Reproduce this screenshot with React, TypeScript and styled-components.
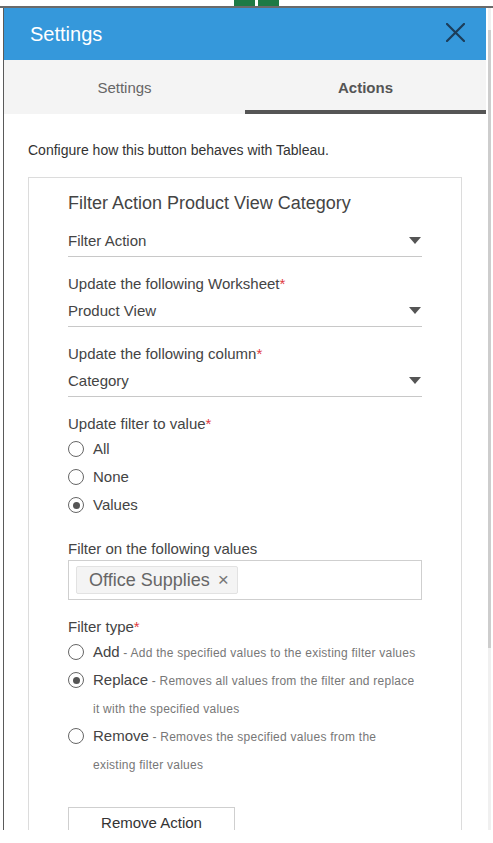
import React, { useState } from 'react';
import styled, { createGlobalStyle } from 'styled-components';

const GlobalStyle = createGlobalStyle`
    html, body {
        margin: 0;
        padding: 0;
        background: #ffffff;
        font-family: "Liberation Sans", Arial, sans-serif;
        overflow: hidden;
    }
    * {
        box-sizing: border-box;
    }
`;

type Choice = { value: string; title: string; hint?: string };

const valueChoices: Choice[] = [
    { value: 'all', title: 'All' },
    { value: 'none', title: 'None' },
    { value: 'values', title: 'Values' },
];

const typeChoices: Choice[] = [
    { value: 'add', title: 'Add', hint: 'Add the specified values to the existing filter values' },
    { value: 'replace', title: 'Replace', hint: 'Removes all values from the filter and replace it with the specified values' },
    { value: 'remove', title: 'Remove', hint: 'Removes the specified values from the existing filter values' },
];

const Caret = () => (
    <svg width="12" height="8" viewBox="0 0 12 8">
        <path d="M0 0 H12 L6 7 Z" fill="#555" />
    </svg>
);

const CloseIcon = () => (
    <svg width="19" height="19" viewBox="0 0 19 19">
        <path d="M1 1 L18 18 M18 1 L1 18" stroke="#1c3d5a" strokeWidth="2.2" strokeLinecap="square" />
    </svg>
);

interface SelectFieldProps {
    label?: string;
    value: string;
    first?: boolean;
}

const SelectField: React.FC<SelectFieldProps> = ({ label, value, first }) => (
    <Field first={first}>
        {label && <Label>{label}<Star>*</Star></Label>}
        <Select>
            <span>{value}</span>
            <Caret />
        </Select>
    </Field>
);

const App: React.FC = () => {
    const [tab, setTab] = useState('actions');
    const [target, setTarget] = useState('values');
    const [mode, setMode] = useState('replace');

    return (
        <>
            <GlobalStyle />
            <TopStrip>
                <GreenTile />
                <GreenTile />
            </TopStrip>
            <Frame>
                <Panel>
                    <Header>
                        <HeaderTitle>Settings</HeaderTitle>
                        <CloseButton aria-label="Close"><CloseIcon /></CloseButton>
                    </Header>
                    <Tabs>
                        <Tab active={tab === 'settings'} onClick={() => setTab('settings')}>Settings</Tab>
                        <Tab active={tab === 'actions'} onClick={() => setTab('actions')}>Actions</Tab>
                    </Tabs>
                    <Body>
                        <Intro>Configure how this button behaves with Tableau.</Intro>
                        <Card>
                            <CardTitle>Filter Action Product View Category</CardTitle>
                            <SelectField value="Filter Action" first />
                            <SelectField label="Update the following Worksheet" value="Product View" />
                            <SelectField label="Update the following column" value="Category" />

                            <Field>
                                <Label>Update filter to value<Star>*</Star></Label>
                                {valueChoices.map(c => (
                                    <RadioRow key={c.value} onClick={() => setTarget(c.value)}>
                                        <Radio checked={target === c.value} />
                                        <RadioText>{c.title}</RadioText>
                                    </RadioRow>
                                ))}
                            </Field>

                            <Field gap={21}>
                                <Label>Filter on the following values</Label>
                                <TagBox>
                                    <Tag>Office Supplies<TagX>×</TagX></Tag>
                                </TagBox>
                            </Field>

                            <Field gap={18}>
                                <Label>Filter type<Star>*</Star></Label>
                                {typeChoices.map(c => (
                                    <RadioRow key={c.value} onClick={() => setMode(c.value)}>
                                        <Radio checked={mode === c.value} />
                                        <RadioText>
                                            {c.title}
                                            <Hint> - {c.hint}</Hint>
                                        </RadioText>
                                    </RadioRow>
                                ))}
                            </Field>

                            <RemoveButton>Remove Action</RemoveButton>
                        </Card>
                    </Body>
                </Panel>
                <Scrollbar>
                    <Thumb />
                </Scrollbar>
            </Frame>
        </>
    );
};

const TopStrip = styled.div`
    height: 8px;
    display: flex;
    gap: 3px;
    padding-left: 234px;
    border-bottom: 2px solid #6a6a6a;
`;

const GreenTile = styled.div`
    width: 21px;
    height: 6px;
    background: #1e7a45;
`;

const Frame = styled.div`
    display: flex;
    height: 822px;
    margin-left: 3px;
    border-left: 1px solid #5a5a5a;
    overflow: hidden;
`;

const Panel = styled.div`
    width: 482px;
    display: flex;
    flex-direction: column;
    overflow: hidden;
`;

const Header = styled.div`
    height: 52px;
    flex-shrink: 0;
    background: #3598db;
    display: flex;
    align-items: center;
    justify-content: space-between;
    padding: 0 21px 0 26px;
`;

const HeaderTitle = styled.div`
    color: #ffffff;
    font-size: 20px;
    margin-top: 1px;
`;

const CloseButton = styled.button`
    background: none;
    border: none;
    padding: 0;
    margin-top: -4px;
    display: flex;
    cursor: pointer;
`;

const Tabs = styled.div`
    height: 54px;
    flex-shrink: 0;
    display: flex;
    background: #f4f4f4;
`;

const Tab = styled.div<{ active?: boolean }>`
    flex: 1;
    display: flex;
    align-items: center;
    justify-content: center;
    font-size: 15px;
    color: ${p => (p.active ? '#555' : '#666')};
    font-weight: ${p => (p.active ? 700 : 400)};
    border-bottom: 4px solid ${p => (p.active ? '#555' : 'transparent')};
    padding-top: 4px;
    cursor: pointer;
`;

const Body = styled.div`
    padding: 27px 24px 0;
    display: flex;
    flex-direction: column;
`;

const Intro = styled.div`
    font-size: 14px;
    line-height: 18px;
    color: #333;
`;

const Card = styled.div`
    margin-top: 18px;
    border: 1px solid #dcdcdc;
    padding: 14px 39px 40px 39px;
    display: flex;
    flex-direction: column;
`;

const CardTitle = styled.div`
    font-size: 18px;
    line-height: 22px;
    color: #444;
`;

const Field = styled.div<{ first?: boolean; gap?: number }>`
    margin-top: ${p => (p.first ? 9 : p.gap ?? 18)}px;
    display: flex;
    flex-direction: column;
`;

const Label = styled.div`
    font-size: 15px;
    line-height: 18px;
    color: #444;
`;

const Star = styled.span`
    color: #e0393e;
`;

const Select = styled.div`
    display: flex;
    align-items: center;
    justify-content: space-between;
    padding: 9px 1px 6px 0;
    line-height: 18px;
    font-size: 15px;
    color: #444;
    border-bottom: 1px solid #c8c8c8;
`;

const RadioRow = styled.label`
    display: flex;
    align-items: flex-start;
    gap: 9px;
    cursor: pointer;
    &:first-of-type {
        margin-top: 2px;
    }
`;

const Radio = styled.span<{ checked?: boolean }>`
    flex-shrink: 0;
    width: 16px;
    height: 16px;
    margin-top: 6px;
    border: 1px solid #666;
    border-radius: 50%;
    display: flex;
    align-items: center;
    justify-content: center;
    background: #fff;
    &::after {
        content: '';
        width: 7px;
        height: 7px;
        border-radius: 50%;
        background: ${p => (p.checked ? '#555' : 'transparent')};
    }
`;

const RadioText = styled.span`
    flex: 1;
    font-size: 15px;
    line-height: 28px;
    color: #444;
`;

const Hint = styled.span`
    font-size: 12px;
    line-height: 12px;
    letter-spacing: 0.25px;
    color: #777;
`;

const TagBox = styled.div`
    margin-top: 2px;
    height: 40px;
    border: 1px solid #cfcfcf;
    padding: 5px 7px;
    display: flex;
    align-items: center;
`;

const Tag = styled.div`
    height: 28px;
    display: flex;
    align-items: center;
    padding: 0 8px 0 12px;
    background: #f4f4f4;
    border: 1px solid #e2e2e2;
    border-radius: 2px;
    font-size: 18px;
    color: #666;
`;

const TagX = styled.span`
    margin-left: 8px;
    font-size: 19px;
    font-weight: 300;
    color: #777;
`;

const RemoveButton = styled.button`
    align-self: flex-start;
    margin-top: 29px;
    width: 167px;
    height: 32px;
    background: #fff;
    border: 1px solid #cfcfcf;
    font-family: inherit;
    font-size: 15px;
    color: #333;
    padding: 0 0 2px;
`;

const Scrollbar = styled.div`
    width: 7px;
    padding: 22px 2px 0 2px;
    background: linear-gradient(to right, #fff 0, #fff 2px, #f0f0f0 2px, #f0f0f0 5px, #fff 5px);
`;

const Thumb = styled.div`
    width: 3px;
    height: 618px;
    background: #cdcdcd;
`;

export default App;
